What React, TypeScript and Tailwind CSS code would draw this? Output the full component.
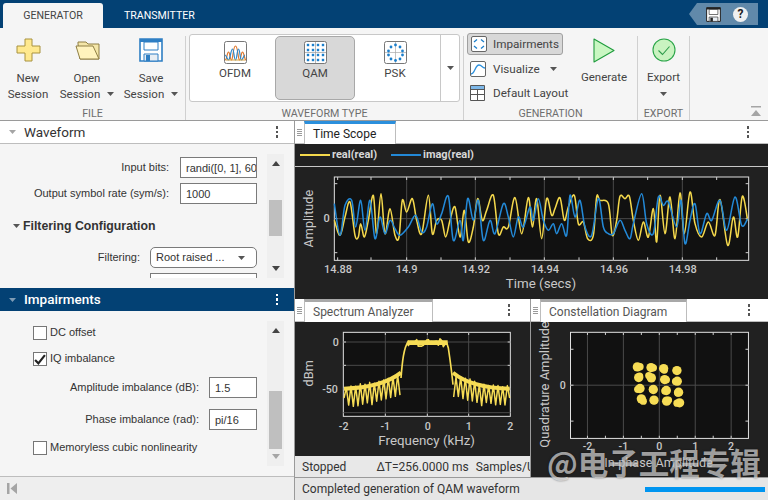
import { ReactNode } from "react"

const FONT = "font-['Roboto','Liberation_Sans',sans-serif]"

// traces read off the scope, coordinates are 3x page pixels
const REAL = [118,300,135,345,150,290,165,245,180,345,190,350,197,310,208,350,220,300,235,225,245,340,258,220,270,340,285,265,300,345,312,350,322,240,335,275,352,235,365,300,380,340,400,225,412,340,425,300,440,300,452,350,465,300,480,260,495,350,508,270,520,365,535,320,548,235,562,300,575,270,595,225,610,340,625,320,640,320,660,232,680,340,700,232,712,320,725,235,740,355,755,235,770,285,780,265,795,232,808,300,820,260,838,225,850,310,865,305,878,355,895,345,905,230,915,240,940,250,952,345,965,300,975,228,990,235,1003,228,1015,300,1030,360,1045,305,1060,350,1075,265,1085,365,1095,225,1110,340,1125,230,1140,355,1155,218,1168,340,1185,215,1200,310,1220,350,1240,305,1260,345,1275,238,1298,375,1315,290,1328,350,1342,228,1358,300]
const IMAG = [118,250,135,345,150,255,170,240,182,320,197,240,210,330,225,240,240,355,255,290,270,340,285,300,300,325,315,345,340,320,362,285,380,335,395,320,412,250,425,310,440,280,460,228,475,360,495,300,505,360,518,235,535,300,550,240,565,360,585,300,600,340,625,250,640,290,655,350,670,290,685,320,705,260,715,300,730,235,745,300,760,330,775,310,785,340,800,310,815,345,825,225,840,290,855,240,870,320,890,345,910,235,925,320,940,340,955,340,975,300,990,330,1005,355,1015,310,1040,220,1055,310,1075,340,1090,230,1105,255,1120,245,1145,320,1158,240,1170,370,1185,300,1200,250,1215,340,1235,280,1250,300,1275,240,1295,330,1320,230,1340,315,1358,295]

const smooth = (p: number[]) => {
	let d = `M${p[0]} ${p[1]}`
	for (let i = 0; i < p.length - 2; i += 2) {
		const x0 = p[i - 2] ?? p[i]
		const y0 = p[i - 1] ?? p[i + 1]
		const x3 = p[i + 4] ?? p[i + 2]
		const y3 = p[i + 5] ?? p[i + 3]
		d += `C${p[i] + (p[i + 2] - x0) / 6} ${p[i + 1] + (p[i + 3] - y0) / 6} ${p[i + 2] - (x3 - p[i]) / 6} ${p[i + 3] - (y3 - p[i + 1]) / 6} ${p[i + 2]} ${p[i + 3]}`
	}
	return d
}

const jitter = (i: number) => {
	const v = Math.sin(i * 12.9898) * 43758.5453
	return v - Math.floor(v)
}

// comb of the side lobes, k runs 0..1 towards the main band
const combPath = (from: number, to: number, dir: number) => {
	let d = `M${from} 300`
	const n = Math.round(Math.abs(to - from) / 14)
	for (let i = 0; i < n; i++) {
		const x = from + (dir * i * 14)
		const k = i / n
		d += `L${x + dir * 7} ${258 - k * k * 36 + jitter(x) * 12}L${x + dir * 14} ${326 - k * k * 42 - jitter(x + 1) * 8 + (i % 6 === 5 ? 8 : 0)}`
	}
	return d
}

const bandPath = () => {
	let d = "M318 240C322 190 326 150 340 130"
	for (let x = 340; x < 456; x += 5) {
		d += `L${x} ${122 + jitter(x) * 24}`
	}
	d += "L460 150C466 190 470 220 474 260"
	return d
}

const BLOBS = [328,207,369,209,407,212,447,218,332,239,370,240,410,245,448,250,336,272,376,275,415,278,452,283,340,303,378,307,416,310,455,315]

const Kebab = ({ className = "" }: { className?: string }) => (
	<div className={`flex flex-col gap-[2px] ${className}`}>
		<span className="w-[2.5px] h-[2.5px] bg-current" />
		<span className="w-[2.5px] h-[2.5px] bg-current" />
		<span className="w-[2.5px] h-[2.5px] bg-current" />
	</div>
)

const Caret = ({ className = "" }: { className?: string }) => (
	<svg width="7" height="4" viewBox="0 0 9 5" className={className}>
		<path d="M0 0h9L4.5 5z" fill="currentColor" />
	</svg>
)

const Grip = () => (
	<div className="w-[9px] flex flex-col gap-[1px] items-center justify-center text-[#9a9a9a] shrink-0">
		<span className="w-[5px] h-[1px] bg-current" />
		<span className="w-[5px] h-[1px] bg-current" />
		<span className="w-[5px] h-[1px] bg-current" />
		<span className="w-[5px] h-[1px] bg-current" />
	</div>
)

const PlusIcon = () => (
	<svg width="25" height="24" viewBox="0 0 25 24">
		<path d="M9 1h7v7h8v7h-8v8H9v-8H1V8h8z" fill="#ffe98f" stroke="#a8923e" strokeLinejoin="round" />
	</svg>
)

const FolderIcon = () => (
	<svg width="25" height="20" viewBox="0 0 25 20">
		<path d="M3 4V2h8l2 2h11v15H5z" fill="#f4e6a8" stroke="#8f7f45" />
		<path d="M1 6h17l6 13H5z" fill="#fff3bd" stroke="#8f7f45" strokeLinejoin="round" />
	</svg>
)

const SaveIcon = ({ color = "#2f7fc4", size = 24 }: { color?: string; size?: number }) => (
	<svg width={size} height={size} viewBox="0 0 24 24">
		<path d="M1 1h22v22H1z" fill="#fff" stroke={color} strokeWidth="1.6" />
		<path d="M1 1h22v3H1z" fill={color} />
		<path d="M5 4h14v8H5z" fill="#fff" stroke={color} />
		<path d="M5 16h14v7H5z" fill="#e8eef4" stroke={color} />
		<path d="M7 17h4v6H7z" fill={color} />
	</svg>
)

const OfdmIcon = () => (
	<svg width="23" height="23" viewBox="0 0 23 23">
		<rect x=".5" y=".5" width="22" height="22" rx="2" fill="#fff" stroke="#777" />
		<path d="M1 19c2 0 2-8 3.5-8S6 19 7.500 19 9 5 11.500 5 14 19 15.500 19s1.500-8 3-8 2 8 3.500 8" fill="none" stroke="#e0762a" strokeWidth="1.2" />
		<path d="M1 14c1.500 0 2 5 3.500 5S7 8 8.500 8s1.500 11 3 11 1.500-11 3-11 1.500 11 3 11 2-5 3.500-5" fill="none" stroke="#2b86c9" strokeWidth="1.2" />
		<path d="M2 19h19" stroke="#d9a441" strokeWidth="1" />
	</svg>
)

const QamIcon = () => (
	<svg width="23" height="23" viewBox="0 0 23 23">
		<rect x=".5" y=".5" width="22" height="22" rx="2" fill="#fff" stroke="#777" />
		<path d="M11.5 1v21M1 11.5h21" stroke="#999" strokeWidth=".7" />
		{[4, 9, 14, 19].flatMap((y) =>
			[4, 9, 14, 19].map((x) => (
				<rect key={`${x}-${y}`} x={x - 1.2} y={y - 1.2} width="2.4" height="2.4" fill="#1c7fcb" />
			))
		)}
	</svg>
)

const PskIcon = () => (
	<svg width="23" height="23" viewBox="0 0 23 23">
		<rect x=".5" y=".5" width="22" height="22" rx="2" fill="#fff" stroke="#777" />
		<path d="M11.5 1v21M1 11.5h21" stroke="#aaa" strokeWidth=".7" />
		{[[11.5,4],[7,6],[16,6],[4.5,10],[18.5,10],[4.5,14],[18.5,14],[7,18],[16,18],[11.5,19.5]].map(([x, y]) => (
			<circle key={`${x}-${y}`} cx={x} cy={y} r="1.4" fill="#1c7fcb" />
		))}
	</svg>
)

const ImpairIcon = () => (
	<svg width="16" height="16" viewBox="0 0 16 16">
		<rect x=".5" y=".5" width="15" height="15" rx="1.5" fill="#fff" stroke="#666" />
		<path d="M6 3.500L3 6M10 3.500L13 6M6 12.500L3 10M10 12.500L13 10" fill="none" stroke="#1c7fcb" strokeWidth="1.3" />
	</svg>
)

const VisualizeIcon = () => (
	<svg width="16" height="16" viewBox="0 0 16 16">
		<rect x=".5" y=".5" width="15" height="15" rx="1.5" fill="#fff" stroke="#666" />
		<path d="M1 13C5 13 5 4 9 4c3 0 3 3 6 3" fill="none" stroke="#2b8fdc" strokeWidth="1.3" />
	</svg>
)

const LayoutIcon = () => (
	<svg width="16" height="16" viewBox="0 0 16 16">
		<path d="M.5.5h14v15H.5z" fill="#fff" stroke="#555" />
		<path d="M1 1h13v3H1z" fill="#7db7e8" />
		<path d="M.5 4.500h14M.5 9.500h14M7.500 4.500v11" stroke="#555" fill="none" />
	</svg>
)

const PlayIcon = () => (
	<svg width="22" height="25" viewBox="0 0 22 25">
		<path d="M1 1l20 11.500L1 24z" fill="#c9f7c2" stroke="#1f9c3d" strokeWidth="1.1" strokeLinejoin="round" />
	</svg>
)

const CheckCircleIcon = () => (
	<svg width="24" height="24" viewBox="0 0 24 24">
		<circle cx="12" cy="12" r="11" fill="#c9f3c0" stroke="#2aa548" strokeWidth="1.1" />
		<path d="M6.500 12.500l4 4 7-8" fill="none" stroke="#2d9b4a" strokeWidth="1.1" />
	</svg>
)

const BigButton = ({ icon, lines, caret = false, w }: { icon: ReactNode; lines: ReactNode[]; caret?: boolean; w: string }) => (
	<div className={`flex flex-col items-center ${w}`}>
		<div className="h-[24px] flex items-center">{icon}</div>
		<div className="mt-[8px] text-center leading-[16px]">
			<div>{lines[0]}</div>
			<div className="flex items-center justify-center gap-[7px] whitespace-nowrap">
				{lines[1]}
				{caret && <Caret className="text-[#555]" />}
			</div>
		</div>
	</div>
)

const Section = ({ title, className, children }: { title: string; className: string; children: ReactNode }) => (
	<div className={`flex flex-col border-r border-[#d0d0d0] h-[84px] mt-[8px] ${className}`}>
		<div className="flex-1 min-h-0">{children}</div>
		<div className="text-center text-[10.7px] leading-[14px] pt-[5px] text-[#6e6e6e] h-[18px]">{title}</div>
	</div>
)

const Gallery = ({ icon, label, active = false }: { icon: ReactNode; label: string; active?: boolean }) => (
	<div className={`w-[80px] h-[64px] mt-[1px] flex flex-col items-center pt-[4px] rounded-[5px] ${active ? "bg-[#d8d8d8] border border-[#a8a8a8]" : "border border-transparent"}`}>
		{icon}
		<span className="mt-[1px] leading-[16px]">{label}</span>
	</div>
)

const Ribbon = () => (
	<div className="h-[93px] shrink-0 bg-[#f5f5f5] border-b border-[#9a9a9a] flex text-[11.5px] text-[#444]">
		<Section title="FILE" className="w-[186px]">
			<div className="flex pl-[3px] pt-[2px]">
				<BigButton w="w-[50px]" icon={<PlusIcon />} lines={["New", "Session"]} />
				<BigButton w="w-[54px] ml-[7px]" icon={<FolderIcon />} lines={["Open", "Session"]} caret />
				<BigButton w="w-[54px] ml-[10px]" icon={<SaveIcon />} lines={["Save", "Session"]} caret />
			</div>
		</Section>
		<Section title="WAVEFORM TYPE" className="w-[278px]">
			<div className="ml-[3px] -mt-[2px] w-[271px] h-[68px] bg-white border border-[#c8c8c8] rounded-[3px] flex pl-[5px]">
				<div className="flex gap-[0px]">
					<Gallery icon={<OfdmIcon />} label="OFDM" />
					<Gallery icon={<QamIcon />} label="QAM" active />
					<Gallery icon={<PskIcon />} label="PSK" />
				</div>
				<div className="ml-auto w-[19px] border-l border-[#c8c8c8] flex items-center justify-center">
					<Caret className="text-[#555]" />
				</div>
			</div>
		</Section>
		<Section title="GENERATION" className="w-[174px]">
			<div className="flex pl-[3px]">
				<div className="flex flex-col w-[110px] -mt-[3px] text-[11.7px]">
					<div className="flex items-center gap-[6px] h-[22px] w-[96px] pl-[3px] bg-[#d8d8d8] border border-[#a0a0a0] rounded-[3px]">
						<ImpairIcon /> <span className="mt-[2px]">Impairments</span>
					</div>
					<div className="flex items-center gap-[7px] h-[28px] pl-[3px]">
						<VisualizeIcon /> <span className="mt-[2px]">Visualize</span> <Caret className="ml-[3px] text-[#555]" />
					</div>
					<div className="flex items-center gap-[7px] h-[20px] pl-[3px] whitespace-nowrap">
						<LayoutIcon /> <span className="mt-[2px]">Default Layout</span>
					</div>
				</div>
				<div className="flex flex-col items-center w-[50px] ml-[2px] pt-[2px]">
					<PlayIcon />
					<span className="mt-[6px] leading-[16px]">Generate</span>
				</div>
			</div>
		</Section>
		<Section title="EXPORT" className="w-[52px]">
			<div className="flex flex-col items-center pt-[2px]">
				<CheckCircleIcon />
				<span className="mt-[7px] leading-[16px]">Export</span>
				<Caret className="mt-[7px] text-[#555]" />
			</div>
		</Section>
		<div className="flex-1 flex items-end justify-end pr-[6px] pb-[3px]">
			<svg width="12" height="11" viewBox="0 0 12 11">
				<path d="M1 0h10v1.500H1zM1 10l5-6 5 6z" fill="#a5a5a5" />
			</svg>
		</div>
	</div>
)

const PanelHeader = ({ title, dark = false }: { title: string; dark?: boolean }) => (
	<div className={`h-[23px] shrink-0 flex items-center pl-[9px] pr-[16px] ${dark ? "bg-[#034174] text-white" : "bg-white text-[#333] border-b border-[#bdbdbd]"}`}>
		<Caret className={dark ? "text-[#7f9cb5]" : "text-[#a5a5a5]"} />
		<span className={`ml-[8px] text-[13.5px] ${dark ? "font-medium" : "font-normal"}`}>{title}</span>
		<Kebab className={`ml-auto ${dark ? "text-white" : "text-[#555]"}`} />
	</div>
)

const Scrollbar = ({ thumbTop, thumbH, h, bottomDim = false }: { thumbTop: string; thumbH: string; h: string; bottomDim?: boolean }) => (
	<div className={`w-[17px] shrink-0 bg-[#efefef] flex flex-col items-center ${h}`}>
		<svg width="8" height="5" viewBox="0 0 8 5" className="mt-[7px] text-[#444]"><path d="M0 5h8L4 0z" fill="currentColor" /></svg>
		<div className={`w-[13px] bg-[#bfbfbf] ${thumbTop} ${thumbH}`} />
		<svg width="8" height="5" viewBox="0 0 8 5" className={`mt-auto mb-[7px] ${bottomDim ? "text-[#a5a5a5]" : "text-[#444]"}`}><path d="M0 0h8L4 5z" fill="currentColor" /></svg>
	</div>
)

const FieldBox = ({ value, w, h }: { value: string; w: string; h: string }) => (
	<div className={`bg-white border border-[#7a7a7a] flex items-center pl-[5px] pt-[1px] overflow-hidden whitespace-nowrap shrink-0 ${w} ${h}`}>{value}</div>
)

const CheckRow = ({ label, checked = false }: { label: string; checked?: boolean }) => (
	<div className="flex items-center h-[14px] pl-[33px] gap-[3px]">
		<span className="w-[14px] h-[14px] bg-white border border-[#767676] flex items-center justify-center shrink-0">
			{checked && (
				<svg width="12" height="11" viewBox="0 0 11 10">
					<path d="M1 5.500l3 3 6-7.500" fill="none" stroke="#222" strokeWidth="2" />
				</svg>
			)}
		</span>
		<span className="-mt-[2px]">{label}</span>
	</div>
)

const LeftPanel = () => (
	<div className="w-[295px] shrink-0 border-r border-[#9a9a9a] flex flex-col bg-[#f5f5f5] text-[11px] text-[#333] font-['Liberation_Sans',sans-serif]">
		<div className="font-['Roboto',sans-serif]"><PanelHeader title="Waveform" /></div>
		<div className="h-[144px] shrink-0 flex pt-[10px]">
			<div className="w-[267px] h-[124px] overflow-hidden">
				<div className="flex items-center justify-end h-[21px] mt-[3px] pr-[10px] gap-[11px]">
					<span>Input bits:</span>
					<FieldBox value="randi([0, 1], 60" w="w-[77px]" h="h-[21px]" />
				</div>
				<div className="flex items-center justify-end h-[21px] mt-[5px] pr-[10px] gap-[11px]">
					<span>Output symbol rate (sym/s):</span>
					<FieldBox value="1000" w="w-[77px]" h="h-[21px]" />
				</div>
				<div className="flex items-center pl-[13px] mt-[13px] h-[18px] gap-[3px] font-bold text-[12.3px]">
					<Caret className="text-[#555]" /> Filtering Configuration
				</div>
				<div className="flex items-center justify-end h-[21px] mt-[12px] pr-[10px] gap-[10px]">
					<span>Filtering:</span>
					<div className="w-[107px] h-[21px] rounded-[5px] border border-[#7a7a7a] bg-white flex items-center pl-[5px]">
						Root raised ...
						<Caret className="ml-auto mr-[11px] text-[#555]" />
					</div>
				</div>
				<div className="ml-[150px] mt-[5px] w-[107px] h-[21px] bg-white border border-[#7a7a7a]" />
			</div>
			<Scrollbar h="h-[124px]" thumbTop="mt-[34px]" thumbH="h-[36px]" />
		</div>
		<div className="font-['Roboto',sans-serif]"><PanelHeader title="Impairments" dark /></div>
		<div className="h-[166px] shrink-0 flex pt-[10px] border-b border-[#bdbdbd]">
			<div className="w-[267px]">
				<div className="mt-[5px]"><CheckRow label="DC offset" /></div>
				<div className="mt-[12px]"><CheckRow label="IQ imbalance" checked /></div>
				<div className="flex items-center justify-end h-[21px] mt-[11px] pr-[10px] gap-[10px]">
					<span>Amplitude imbalance (dB):</span>
					<FieldBox value="1.5" w="w-[48px]" h="h-[21px]" />
				</div>
				<div className="flex items-center justify-end h-[21px] mt-[11px] pr-[10px] gap-[10px]">
					<span>Phase imbalance (rad):</span>
					<FieldBox value="pi/16" w="w-[48px]" h="h-[21px]" />
				</div>
				<div className="mt-[11px]"><CheckRow label="Memoryless cubic nonlinearity" /></div>
			</div>
			<Scrollbar h="h-[145px]" thumbTop="mt-[58px]" thumbH="h-[58px]" bottomDim />
		</div>
		<div className="flex-1 bg-[#eeeeee] flex items-center pl-[7px]">
			<svg width="10" height="11" viewBox="0 0 10 11">
				<path d="M0 0h2.500v11H0zM10 0v11L3.500 5.500z" fill="#a5a5a5" />
			</svg>
		</div>
	</div>
)

const ScopeTab = ({ title, blue = false, w, kebabGap }: { title: string; blue?: boolean; w: string; kebabGap: string }) => (
	<div className="h-[23px] bg-white flex items-stretch border-b border-[#bdbdbd] shrink-0">
		<Grip />
		<div className={`flex items-center pl-[8px] bg-white border-r border-l border-[#bdbdbd] border-t-[3px] -mb-[1px] text-[12px] ${blue ? "border-t-[#2b8fdc] text-[#222]" : "border-t-[#a8a8a8] text-[#555]"} ${w}`}>
			{title}
		</div>
		<Kebab className={`self-center text-[#555] ml-auto ${kebabGap}`} />
	</div>
)

const TICK = "#d0d0d0"

const TimePlot = () => (
	<svg viewBox="0 140 1419 396" className="block w-[473px] h-[132px]" fontFamily="Roboto, 'Liberation Sans', sans-serif">
		<rect x="118" y="170" width="1243" height="250" fill="#111" stroke="#e0e0e0" strokeWidth="3" />
		{[335, 541, 748, 955, 1162].map((x) => (
			<path key={x} d={`M${x} 170V420`} stroke="#4a4a4a" strokeWidth="3" />
		))}
		<path d="M118 295H1361" stroke="#4a4a4a" strokeWidth="3" />
		{[128, 228, 335, 438, 541, 645, 748, 852, 955, 1058, 1162, 1265].map((x) => (
			<path key={x} d={`M${x} 170v9M${x} 420v-9`} stroke={TICK} strokeWidth="3" />
		))}
		{[190, 295, 397].map((y) => (
			<path key={y} d={`M118 ${y}h9M1361 ${y}h-9`} stroke={TICK} strokeWidth="3" />
		))}
		<path d={smooth(REAL)} fill="none" stroke="#f4d84c" strokeWidth="4.6" />
		<path d={smooth(IMAG)} fill="none" stroke="#2389d7" strokeWidth="4.6" />
		<g fill="#c8c8c8" fontSize="33" fontWeight="500" textAnchor="middle">
			<text x="129" y="458">14.88</text>
			<text x="335" y="458">14.9</text>
			<text x="543" y="458">14.92</text>
			<text x="750" y="458">14.94</text>
			<text x="957" y="458">14.96</text>
			<text x="1163" y="458">14.98</text>
			<text x="95" y="306">0</text>
		</g>
		<text x="738" y="503" fill="#c8c8c8" fontSize="40" textAnchor="middle">Time (secs)</text>
		<text transform="translate(54 295) rotate(-90)" fill="#c8c8c8" fontSize="38" textAnchor="middle">Amplitude</text>
	</svg>
)

const SpectrumPlot = () => (
	<svg viewBox="0 72 705 402" className="block w-[235px] h-[134px] bg-[#212121]" fontFamily="Roboto, 'Liberation Sans', sans-serif">
		<rect x="145" y="103" width="501" height="252" fill="#111" stroke="#e0e0e0" strokeWidth="3" />
		{[271, 397, 521].map((x) => (
			<path key={x} d={`M${x} 103V355`} stroke="#4a4a4a" strokeWidth="3" />
		))}
		{[132, 202, 273, 344].map((y) => (
			<path key={y} d={`M145 ${y}H646`} stroke="#4a4a4a" strokeWidth="3" />
		))}
		{[271, 397, 521].map((x) => (
			<path key={x} d={`M${x} 103v8M${x} 355v-8`} stroke={TICK} strokeWidth="3" />
		))}
		{[132, 202, 273].map((y) => (
			<path key={y} d={`M145 ${y}h8M646 ${y}h-8`} stroke={TICK} strokeWidth="3" />
		))}
		<g fill="none" stroke="#f6dc55" strokeLinejoin="round">
			<path d={combPath(147, 318, 1)} strokeWidth="4.5" />
			<path d={combPath(644, 474, -1)} strokeWidth="4.5" />
			<path d="M147 272C220 270 280 254 318 224" strokeWidth="12" />
			<path d="M644 272C570 270 510 254 474 224" strokeWidth="12" />
			<path d={bandPath()} strokeWidth="5" />
			<path d="M338 134H458" strokeWidth="14" />
		</g>
		<g fill="#c8c8c8" fontSize="32" fontWeight="500" textAnchor="middle">
			<text x="146" y="396">-2</text>
			<text x="271" y="396">-1</text>
			<text x="398" y="396">0</text>
			<text x="521" y="396">1</text>
			<text x="646" y="396">2</text>
			<text x="122" y="143">0</text>
			<text x="105" y="284">-50</text>
		</g>
		<text x="395" y="441" fill="#c8c8c8" fontSize="40" textAnchor="middle">Frequency (kHz)</text>
		<text transform="translate(54 226) rotate(-90)" fill="#c8c8c8" fontSize="38" textAnchor="middle">dBm</text>
	</svg>
)

const ConstellationPlot = () => (
	<svg viewBox="9 72 711 466" className="block w-[237px] h-[155px]" fontFamily="Roboto, 'Liberation Sans', sans-serif">
		<rect x="127" y="103" width="535" height="319" fill="#111" stroke="#e0e0e0" strokeWidth="3" />
		{[178, 286, 394, 502, 610].map((x) => (
			<path key={x} d={`M${x} 103V422`} stroke="#4a4a4a" strokeWidth="3" />
		))}
		<path d="M127 262H662" stroke="#4a4a4a" strokeWidth="3" />
		{[178, 232, 286, 340, 394, 448, 502, 556, 610].map((x) => (
			<path key={x} d={`M${x} 103v8M${x} 422v-8`} stroke={TICK} strokeWidth="3" />
		))}
		{[154, 262, 370].map((y) => (
			<path key={y} d={`M127 ${y}h9M662 ${y}h-9`} stroke={TICK} strokeWidth="3" />
		))}
		<g fill="#f6dc55">
			{BLOBS.map((_, i) =>
				i % 2 === 0 ? (
					<g key={i}>
						<circle cx={BLOBS[i]} cy={BLOBS[i + 1]} r="14" />
						<circle cx={BLOBS[i] + 8 - jitter(i) * 16} cy={BLOBS[i + 1] + 7 - jitter(i + 3) * 14} r="11" />
					</g>
				) : null
			)}
		</g>
		<g fill="#c8c8c8" fontSize="32" fontWeight="500" textAnchor="middle">
			<text x="178" y="458">-2</text>
			<text x="286" y="458">-1</text>
			<text x="394" y="458">0</text>
			<text x="502" y="458">1</text>
			<text x="610" y="458">2</text>
			<text x="104" y="272">0</text>
		</g>
		<text x="392" y="507" fill="#c8c8c8" fontSize="38" textAnchor="middle">In-phase Amplitude</text>
		<text transform="translate(62 260) rotate(-90)" fill="#c8c8c8" fontSize="39" textAnchor="middle">Quadrature Amplitude</text>
	</svg>
)

const RightPanel = () => (
	<div className="flex-1 min-w-0 flex flex-col">
		<ScopeTab title="Time Scope" blue w="w-[92px]" kebabGap="mr-[19px]" />
		<div className="h-[155px] shrink-0 bg-[#212121]">
			<div className="h-[23px] border-b border-[#c8c8c8] flex items-center pl-[5px] text-[11px] font-bold text-[#d8d8d8]">
				<span className="w-[30px] h-[1.5px] bg-[#f4d84c]" />
				<span className="ml-[2px] w-[60px]">real(real)</span>
				<span className="-ml-[1px] w-[30px] h-[1.5px] bg-[#2389d7]" />
				<span className="ml-[2px]">imag(real)</span>
			</div>
			<TimePlot />
		</div>
		<div className="flex-1 flex min-h-0">
			<div className="w-[236px] shrink-0 flex flex-col border-r border-[#9a9a9a]">
				<ScopeTab title="Spectrum Analyzer" w="w-[129px]" kebabGap="mr-[20px]" />
				<SpectrumPlot />
				<div className="flex-1 bg-[#e8e8e8] flex items-center pl-[7px] text-[12px] text-[#333] whitespace-nowrap overflow-hidden">
					<span>Stopped</span>
					<span className="ml-[30px]">ΔT=256.0000 ms</span>
					<span className="ml-[7px]">Samples/Update</span>
				</div>
			</div>
			<div className="flex-1 min-w-0 flex flex-col">
				<ScopeTab title="Constellation Diagram" w="w-[147px]" kebabGap="mr-[18px]" />
				<div className="flex-1 bg-[#212121] overflow-hidden">
					<ConstellationPlot />
				</div>
			</div>
		</div>
		<div className="h-[23px] shrink-0 bg-[#e6e6e6] border-t border-[#9a9a9a] flex items-center pl-[7px] text-[12px] text-[#333]">
			<span>Completed generation of QAM waveform</span>
			<span className="ml-auto mr-[3px] w-[120px] h-[5px] bg-[#0095f0]" />
		</div>
	</div>
)

export default function App() {
	return (
		<div className={`relative w-[768px] h-[500px] overflow-hidden flex flex-col ${FONT}`}>
			<div className="h-[28px] shrink-0 bg-[#034174] flex items-end pl-[3px] text-[10.6px]">
				<div className="w-[100px] h-[25px] bg-[#f5f5f5] rounded-t-[3px] flex items-center justify-center text-[#444]">GENERATOR</div>
				<div className="ml-[21px] h-[25px] flex items-center text-white">TRANSMITTER</div>
				<div className="ml-auto mr-[10px] mb-[3px] w-[69px] h-[22px] bg-[#6189aa] [clip-path:polygon(8px_0,100%_0,100%_100%,8px_100%,0_50%)] flex items-center pl-[17px] gap-[12px]">
					<SaveIcon color="#222" size={15} />
					<span className="w-[15px] h-[15px] rounded-full bg-[#f0f0f0] text-[#222] text-[12px] font-bold flex items-center justify-center">?</span>
				</div>
			</div>
			<Ribbon />
			<div className="flex-1 min-h-0 flex">
				<LeftPanel />
				<RightPanel />
			</div>
			<div className="absolute left-[547px] top-[442px] text-[30.5px] leading-[40px] font-bold text-white/60 whitespace-nowrap font-['Noto_Sans_CJK_SC',sans-serif] [text-shadow:0_0_2px_rgba(0,0,0,0.5)]">
				@电子工程专辑
			</div>
		</div>
	)
}
